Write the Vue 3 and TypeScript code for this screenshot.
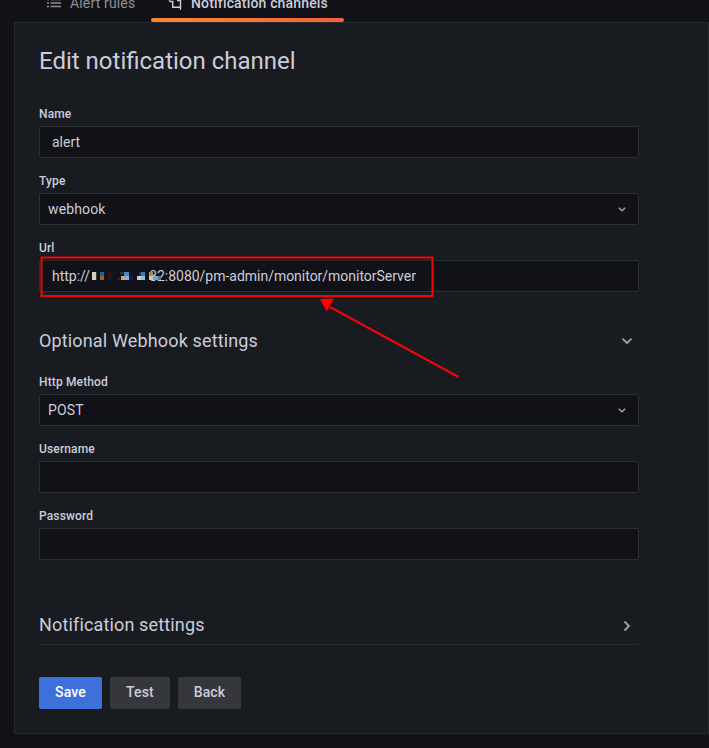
<script setup lang="ts">
interface Block { x: number; y: number; w: number; h: number; c: string }

const blocks: Block[] = [
  { x: 2, y: 2, w: 4, h: 8, c: '#d2d0c0' },
  { x: 6, y: 2, w: 1, h: 8, c: '#3b3d3c' },
  { x: 10, y: 2, w: 4, h: 4, c: '#215f9e' },
  { x: 10, y: 6, w: 4, h: 4, c: '#a3611f' },
  { x: 18, y: 2, w: 4, h: 8, c: '#26131b' },
  { x: 27, y: 8, w: 3, h: 2, c: '#25262b' },
  { x: 30, y: 2, w: 4, h: 2, c: '#34353a' },
  { x: 31, y: 6, w: 4, h: 4, c: '#c9a578' },
  { x: 34, y: 2, w: 5, h: 4, c: '#4d87bd' },
  { x: 35, y: 6, w: 4, h: 4, c: '#83b3dd' },
  { x: 39, y: 6, w: 4, h: 4, c: '#19195c' },
  { x: 47, y: 6, w: 4, h: 4, c: '#c5d3cf' },
  { x: 49, y: 2, w: 2, h: 4, c: '#32373e' },
  { x: 51, y: 2, w: 4, h: 4, c: '#3181b7' },
  { x: 51, y: 6, w: 4, h: 4, c: '#8bc1e2' },
  { x: 59, y: 2, w: 4, h: 4, c: '#a18d6e' },
  { x: 59, y: 6, w: 4, h: 4, c: '#dcc494' },
  { x: 63, y: 6, w: 5, h: 4, c: '#69a2d5' },
  { x: 68, y: 6, w: 3, h: 4, c: '#487da9' },
]
</script>

<template>
  <div class="page">
    <nav class="tabs">
      <a class="tab">
        <svg class="icon" viewBox="0 0 16 16"><path d="M2 4.500h2M2 8h2M2 11.500h2M5.500 4.500H16M5.500 8H16M5.500 11.500H16" /></svg>
        <span>Alert rules</span>
      </a>
      <a class="tab active">
        <svg class="icon" viewBox="0 0 16 16"><path d="M2 5.500l1.500 1h2.200v5.700h8.500M13.500 4v10.800M13.500 5.500H10" /></svg>
        <span>Notification channels</span>
      </a>
    </nav>
    <main class="panel">
      <h1>Edit notification channel</h1>
      <div class="form">
        <div class="field"><label>Name</label><div class="input">alert</div></div>
        <div class="field">
          <label>Type</label>
          <div class="input select">webhook<svg class="caret" viewBox="0 0 16 16"><path d="M4.800 6.800 8 9.800l3.200-3" /></svg></div>
        </div>
        <div class="field url">
          <label>Url</label>
          <div class="input">
            <span>http://</span>
            <span class="host">
              <svg class="mosaic" viewBox="0 0 72 12" shape-rendering="crispEdges">
                <rect v-for="(b, i) in blocks" :key="i" :x="b.x" :y="b.y" :width="b.w" :height="b.h" :fill="b.c" />
              </svg>
            </span>
            <span class="rest">82:8080/pm-admin/monitor/monitorServer</span>
          </div>
          <svg class="annotation" viewBox="0 0 422 126">
            <rect x="2.500" y="1.500" width="391" height="38.500" />
            <path d="M291 51 419.500 121" />
            <polygon points="281,43 295,42.500 287.500,55.500" />
          </svg>
        </div>
        <div class="section">
          <h3>Optional Webhook settings</h3>
          <svg class="chevron" viewBox="0 0 16 16"><path d="m3.500 5.600 4.500 4.400 4.500-4.400" /></svg>
        </div>
        <div class="field">
          <label>Http Method</label>
          <div class="input select">POST<svg class="caret" viewBox="0 0 16 16"><path d="M4.800 6.800 8 9.800l3.200-3" /></svg></div>
        </div>
        <div class="field"><label>Username</label><div class="input"></div></div>
        <div class="field"><label>Password</label><div class="input"></div></div>
        <div class="section last">
          <h3>Notification settings</h3>
          <svg class="chevron" viewBox="0 0 16 16"><path d="m5.500 4.500 4.400 4.500-4.400 4.500" /></svg>
        </div>
        <div class="buttons">
          <button class="primary">Save</button>
          <button class="test">Test</button>
          <button>Back</button>
        </div>
      </div>
    </main>
  </div>
</template>

<style>
body { margin: 0; background: #111217; overflow: hidden; }
</style>

<style scoped>
* { box-sizing: border-box; }
.page { width: 709px; height: 748px; background: #111217; color: #ccccdc; font-family: Roboto, "Liberation Sans", sans-serif; font-size: 14px; line-height: 22px; overflow: hidden; }
.tabs { height: 22px; display: flex; align-items: flex-end; padding-left: 29px; overflow: hidden; }
.tab { flex: none; display: flex; gap: 8px; padding: 11px 16px 0; height: 41px; color: #8e8f99; width: 122px; white-space: nowrap; letter-spacing: 0.15px; }
.tab:first-child span { margin-left: 1px; }
.tab.active { position: relative; width: 193px; color: #ccccdc; font-weight: 500; letter-spacing: 0.17px; }
.tab.active::after { content: ""; position: absolute; left: 0; right: 0; bottom: 0; height: 4px; border-radius: 2px; background: linear-gradient(90deg, #ff8833, #f55f3e); }
.icon { flex: none; width: 16px; height: 16px; margin-top: 3px; fill: none; stroke: currentColor; stroke-width: 1.4; }
.panel { margin-left: 14px; height: 712px; border: 1px solid #25282d; background: #181b1f; padding: 24px; }
h1 { margin: 0; font-size: 24px; line-height: 28px; font-weight: 400; }
.form { width: 600px; margin-top: 30px; }
.field { height: 67px; }
label { display: block; font-size: 12px; font-weight: 500; line-height: 16px; padding-top: 1px; margin-bottom: 4px; letter-spacing: 0.14px; }
.input { height: 32px; border: 1px solid #2c2e33; border-radius: 2px; background: #111217; display: flex; align-items: center; padding: 0 12px; white-space: nowrap; }
.select { justify-content: space-between; padding: 0 8px; letter-spacing: 0.14px; }
.caret { width: 16px; height: 16px; fill: none; stroke: #a0a1ab; stroke-width: 1.5; }
.url { position: relative; }
.host { width: 59px; height: 12px; }
.mosaic { display: block; width: 72px; height: 12px; position: relative; z-index: 1; }
.rest { letter-spacing: -0.02px; }
.annotation { position: absolute; left: 0; top: 17px; width: 422px; height: 126px; z-index: 2; fill: none; stroke: #f20509; stroke-width: 2; }
.annotation polygon { fill: #ff0000; stroke: none; }
.section { display: flex; align-items: center; justify-content: space-between; height: 67px; padding: 2px 4px 0 0; }
h3 { margin: 0; font-size: 18px; line-height: 22px; font-weight: 400; letter-spacing: 0.15px; }
.chevron { width: 16px; height: 16px; fill: none; stroke: #9a9ba5; stroke-width: 2; }
.section.last { height: 71px; border-bottom: 1px solid #25282d; padding-top: 31px; }
.buttons { display: flex; gap: 8px; margin-top: 32px; }
button { width: 63px; height: 32px; border: 0; border-radius: 2px; padding: 0 0 2px; font: 500 14px/30px Roboto, "Liberation Sans", sans-serif; letter-spacing: 0.15px; background: #35373c; color: #ccccdc; }
.test { width: 60px; }
.primary { background: #3d71d9; color: #fff; }
</style>
